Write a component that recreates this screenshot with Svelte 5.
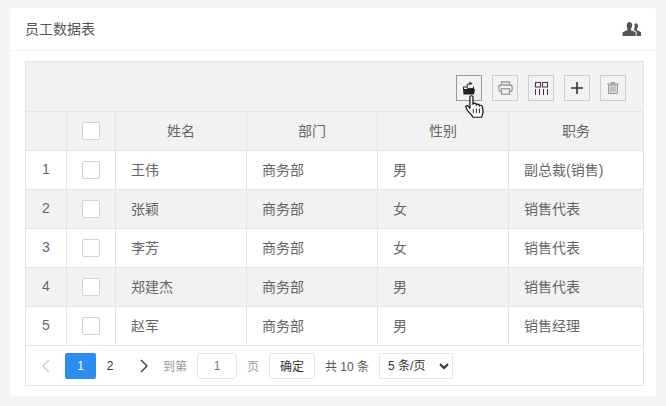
<script>
  const rows = [
    { n: 1, name: '王伟', dept: '商务部', sex: '男', job: '副总裁(销售)' },
    { n: 2, name: '张颖', dept: '商务部', sex: '女', job: '销售代表' },
    { n: 3, name: '李芳', dept: '商务部', sex: '女', job: '销售代表' },
    { n: 4, name: '郑建杰', dept: '商务部', sex: '男', job: '销售代表' },
    { n: 5, name: '赵军', dept: '商务部', sex: '男', job: '销售经理' }
  ];
</script>

<div class="page">
  <div class="card">
    <div class="head">
      <span class="title">员工数据表</span>
      <svg class="users" width="20" height="16" viewBox="0 0 20 16">
        <path fill="#555" d="M7.500 1C9.200 1 10.200 2.300 10.200 4.200c0 1.500-.6 2.800-1.300 3.500v1.500c2 .7 4 1.500 4.800 2.400V15H.6v-3.400c.8-.9 2.800-1.700 4.800-2.400V7.700C4.700 7 4.800 5.700 4.800 4.200 4.800 2.300 5.800 1 7.500 1z"/>
        <path fill="#555" d="M13.600 2.200c1.500 0 2.400 1.200 2.400 2.800 0 1.300-.5 2.400-1.100 3.100v1.200c1.700.6 3.400 1.300 4.100 2.100V15h-4.400v-3.900c-.7-.8-1.600-1.300-2.500-1.800V8.100c.3-.8.600-2 .6-3.300 0-.8-.2-1.500-.4-2 .5-.4 1.100-.6 1.800-.6z"/>
      </svg>
    </div>
    <div class="body">
      <div class="table">
        <div class="toolbar">
          <button class="tool active" aria-label="导出">
            <svg width="14" height="14" viewBox="0 0 14 14">
              <path fill="#222" d="M1 8h12l-1 5.500H1.500z"/>
              <path fill="none" stroke="#333" stroke-width="1.100" d="M1.500 8V6h3.500l1 1.500h5.500V5.500"/>
              <path fill="none" stroke="#333" stroke-width="1.100" d="M5 5.500C5 3.500 6 2.500 8 2.500"/>
              <path fill="#333" d="M7.500.5 10.500 2.500 7.500 4.500z"/>
            </svg>
          </button>
          <button class="tool" aria-label="打印">
            <svg width="15" height="14" viewBox="0 0 15 14" fill="none" stroke="#999" stroke-width="1.300">
              <path d="M3.500 4V1h8v3"/>
              <rect x=".8" y="4" width="13.400" height="6.500" rx="2.200"/>
              <rect x="3.500" y="7.800" width="8" height="5.400" fill="#f2f2f2"/>
            </svg>
          </button>
          <button class="tool" aria-label="列">
            <svg width="13" height="13" viewBox="0 0 13 13" fill="none" stroke="#4a2a4a" stroke-width="1">
              <rect x=".5" y=".5" width="5" height="4.500"/>
              <rect x="7.500" y=".5" width="5" height="4.500"/>
              <path d="M.5 7v6M4.500 7v6M8.500 7v6M12.500 7v6"/>
            </svg>
          </button>
          <button class="tool" aria-label="新增">
            <svg width="12" height="12" viewBox="0 0 12 12">
              <path stroke="#333" stroke-width="1.600" d="M6 0v12M0 6h12"/>
            </svg>
          </button>
          <button class="tool" aria-label="删除">
            <svg width="12" height="12" viewBox="0 0 12 12">
              <path fill="#999" d="M0 1.500h12v1H0zM4 0h4v1.500H4z"/>
              <path fill="#ddd" stroke="#999" stroke-width="1" d="M1.500 3v8.500h9V3z"/>
              <path stroke="#999" stroke-width=".8" d="M4 4.500v5.500M6 4.500v5.500M8 4.500v5.500"/>
            </svg>
          </button>
          <svg class="hand" width="19" height="23" viewBox="1 0.500 15.500 21" preserveAspectRatio="none">
            <path fill="#fff" stroke="#111" stroke-width="1" stroke-linejoin="round" d="M5 2.200C5 .8 7.500.8 7.500 2.200V9c0-1.400 2.600-1.400 2.600 0v.8c0-1.300 2.500-1.300 2.500 0v.9c0-1.200 2.400-1.200 2.400.1 0 0 1 3.500.6 6.200-.2 1.300-.7 2.300-1 3.800H7.500c-.6-1.700-1.700-3-3.100-4.500-.9-1-2.400-3.700-2.700-4.700-.4-1.200 1.100-1.900 2-.8L5 12.700z"/>
            <path stroke="#111" stroke-width=".8" d="M7.800 13v4M10.300 13v4M12.800 13v4"/>
          </svg>
        </div>
        <div class="row header">
          <div class="c idx"></div>
          <div class="c chk"><span class="box"></span></div>
          <div class="c w center"><span class="t">姓名</span></div>
          <div class="c w center"><span class="t">部门</span></div>
          <div class="c w center"><span class="t">性别</span></div>
          <div class="c last center"><span class="t">职务</span></div>
        </div>
        {#each rows as r}
          <div class="row" class:even={r.n % 2 === 0}>
            <div class="c idx"><span class="t">{r.n}</span></div>
            <div class="c chk"><span class="box"></span></div>
            <div class="c w"><span class="t">{r.name}</span></div>
            <div class="c w"><span class="t">{r.dept}</span></div>
            <div class="c w"><span class="t">{r.sex}</span></div>
            <div class="c last"><span class="t">{r.job}</span></div>
          </div>
        {/each}
        <div class="pager">
          <svg class="arrow first" width="10" height="14" viewBox="0 0 10 14"><path fill="none" stroke="#ccc" stroke-width="1.300" d="M8 1 2 7l6 6"/></svg>
          <span class="pg on">1</span>
          <span class="pg two">2</span>
          <svg class="arrow next" width="10" height="14" viewBox="0 0 10 14"><path fill="none" stroke="#333" stroke-width="1.300" d="m2 1 6 6-6 6"/></svg>
          <span class="lbl to">到第</span>
          <span class="inp">1</span>
          <span class="lbl pgw">页</span>
          <span class="ok">确定</span>
          <span class="total">共 10 条</span>
          <select class="size"><option>5 条/页</option></select>
        </div>
      </div>
    </div>
  </div>
</div>

<style>
  :global(body) { margin: 0; background: #f4f5f7; }
  .page {
    width: 666px; height: 406px; box-sizing: border-box;
    padding: 8px 10px 10px; overflow: hidden;
    font-family: "Liberation Sans", "Noto Sans CJK SC", sans-serif;
    font-size: 14px; color: #666;
  }
  .card { background: #fff; border-radius: 3px; height: 388px; }
  .head {
    height: 42px; border-bottom: 1px solid #f4f4f4;
    display: flex; align-items: center; justify-content: space-between;
    padding: 0 14px 0 15px;
  }
  .title { color: #555; font-size: 14px; position: relative; top: -1px; }
  .users { display: block; }
  .body { padding: 10px 12px 0 15px; }
  .table { border: 1px solid #e4e4e4; }
  .toolbar {
    height: 50px; background: #f2f2f2; position: relative;
    display: flex; justify-content: flex-end; align-items: flex-start;
    gap: 10px; padding: 13px 17px 0 0; box-sizing: border-box;
    border-bottom: 1px solid #e4e4e4;
  }
  .tool {
    width: 26px; height: 26px; padding: 0; margin: 0;
    border: 1px solid #ccc; background: transparent;
    display: flex; align-items: center; justify-content: center;
    box-sizing: border-box; border-radius: 0;
  }
  .tool.active { border-color: #999; }
  .tool svg { display: block; }
  .hand { position: absolute; left: 439px; top: 33px; }
  .row { display: flex; height: 39px; box-sizing: border-box; border-bottom: 1px solid #e4e4e4; background: #fff; }
  .row.even { background: #f2f2f2; }
  .row.header { background: #f2f2f2; }
  .c {
    box-sizing: border-box; display: flex; align-items: center;
    border-right: 1px solid #e4e4e4; padding: 0 15px; color: #666;
  }
  .t { position: relative; top: -1px; }
  .center { justify-content: center; }
  .idx { width: 41px; padding: 0; justify-content: center; }
  .chk { width: 49px; padding: 0; justify-content: center; }
  .w { width: 131px; }
  .last { flex: 1; border-right: 0; }
  .box {
    display: block; width: 18px; height: 18px; box-sizing: border-box;
    border: 1px solid #d2d2d2; border-radius: 2px; background: #fff;
  }
  .pager {
    height: 39px; display: flex; align-items: center;
    font-size: 12px; color: #333; background: #fff;
  }
  .arrow { display: block; }
  .first { margin-left: 15px; }
  .pg {
    height: 26px; display: flex; align-items: center; justify-content: center;
    border-radius: 2px; color: #333; font-size: 12px;
  }
  .pg.on { width: 31px; background: #2d8cf0; color: #fff; margin-left: 14px; }
  .pg.two { width: 28px; }
  .next { margin-left: 15px; }
  .lbl { color: #999; }
  .to { margin-left: 14px; }
  .inp {
    width: 40px; height: 26px; box-sizing: border-box; margin-left: 10px;
    border: 1px solid #e6e6e6; border-radius: 4px;
    display: flex; align-items: center; justify-content: center; color: #777;
  }
  .pgw { margin-left: 10px; }
  .ok {
    width: 46px; height: 26px; box-sizing: border-box; margin-left: 10px;
    border: 1px solid #e6e6e6; border-radius: 2px;
    display: flex; align-items: center; justify-content: center; color: #333;
  }
  .total { margin-left: 10px; color: #555; }
  .size {
    width: 74px; height: 26px; box-sizing: border-box; margin-left: 10px;
    border: 1px solid #e6e6e6; border-radius: 2px; background: #fff;
    font: 12px "Liberation Sans", "Noto Sans CJK SC", sans-serif; color: #333; padding: 0 4px;
  }
</style>
